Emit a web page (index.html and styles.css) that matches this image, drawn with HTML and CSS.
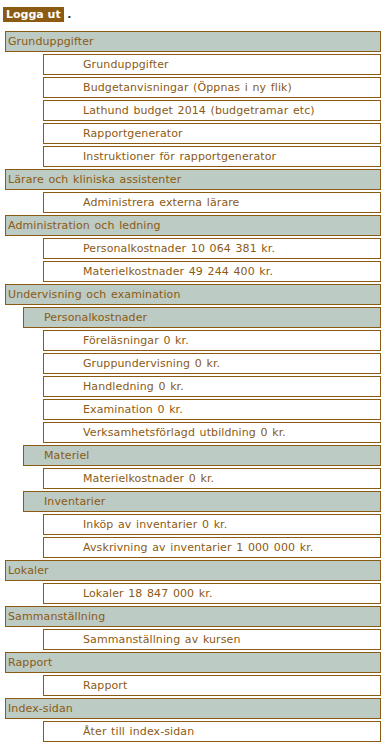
FILE: index.html
```html
<!DOCTYPE html>
<html lang="sv">
<head>
<meta charset="utf-8">
<title>Meny</title>
<link rel="stylesheet" href="styles.css">
</head>
<body>
<div class="top"><a class="logout" href="#">Logga ut</a> <span class="dot">.</span></div>
<nav class="menu">
  <div class="h1">Grunduppgifter</div>
  <a class="item" href="#">Grunduppgifter</a>
  <a class="item" href="#">Budgetanvisningar (Öppnas i ny flik)</a>
  <a class="item" href="#">Lathund budget 2014 (budgetramar etc)</a>
  <a class="item" href="#">Rapportgenerator</a>
  <a class="item" href="#">Instruktioner för rapportgenerator</a>
  <div class="h1">Lärare och kliniska assistenter</div>
  <a class="item" href="#">Administrera externa lärare</a>
  <div class="h1">Administration och ledning</div>
  <a class="item" href="#">Personalkostnader 10 064 381 kr.</a>
  <a class="item" href="#">Materielkostnader 49 244 400 kr.</a>
  <div class="h1">Undervisning och examination</div>
  <div class="h2">Personalkostnader</div>
  <a class="item" href="#">Föreläsningar 0 kr.</a>
  <a class="item" href="#">Gruppundervisning 0 kr.</a>
  <a class="item" href="#">Handledning 0 kr.</a>
  <a class="item" href="#">Examination 0 kr.</a>
  <a class="item" href="#">Verksamhetsförlagd utbildning 0 kr.</a>
  <div class="h2">Materiel</div>
  <a class="item" href="#">Materielkostnader 0 kr.</a>
  <div class="h2">Inventarier</div>
  <a class="item" href="#">Inköp av inventarier 0 kr.</a>
  <a class="item" href="#">Avskrivning av inventarier 1 000 000 kr.</a>
  <div class="h1">Lokaler</div>
  <a class="item" href="#">Lokaler 18 847 000 kr.</a>
  <div class="h1">Sammanställning</div>
  <a class="item" href="#">Sammanställning av kursen</a>
  <div class="h1">Rapport</div>
  <a class="item" href="#">Rapport</a>
  <div class="h1">Index-sidan</div>
  <a class="item" href="#">Åter till index-sidan</a>
</nav>
</body>
</html>
```
FILE: styles.css
```css
html, body {
  margin: 0;
  padding: 0;
  background: #ffffff;
}
body {
  font-family: "DejaVu Sans", Verdana, sans-serif;
  font-size: 11px;
  color: #8b5a13;
}
.top {
  padding: 7px 0 0 3px;
  height: 15px;
  line-height: 15px;
  color: #333333;
}
.logout {
  display: inline-block;
  background: #8b5a13;
  color: #ffffff;
  font-weight: bold;
  text-decoration: none;
  padding: 0 3px;
  height: 15px;
  line-height: 15px;
}
.dot {
  font-weight: bold;
  color: #333333;
}
.menu {
  display: flex;
  flex-direction: column;
  gap: 2px;
  padding: 9px 2px 0 5px;
}
.h1, .h2, .item {
  box-sizing: border-box;
  height: 21px;
  line-height: 19px;
  border: 1px solid #8b5a13;
  color: #8b5a13;
  text-decoration: none;
  white-space: nowrap;
  letter-spacing: 0.1px;
  word-spacing: 1px;
}
.h1, .h2 {
  background: #bccbc3;
}
.h1 {
  padding-left: 2px;
}
.h2 {
  margin-left: 18px;
  padding-left: 20px;
}
.item {
  background: #ffffff;
  margin-left: 38px;
  padding-left: 39px;
}
```
